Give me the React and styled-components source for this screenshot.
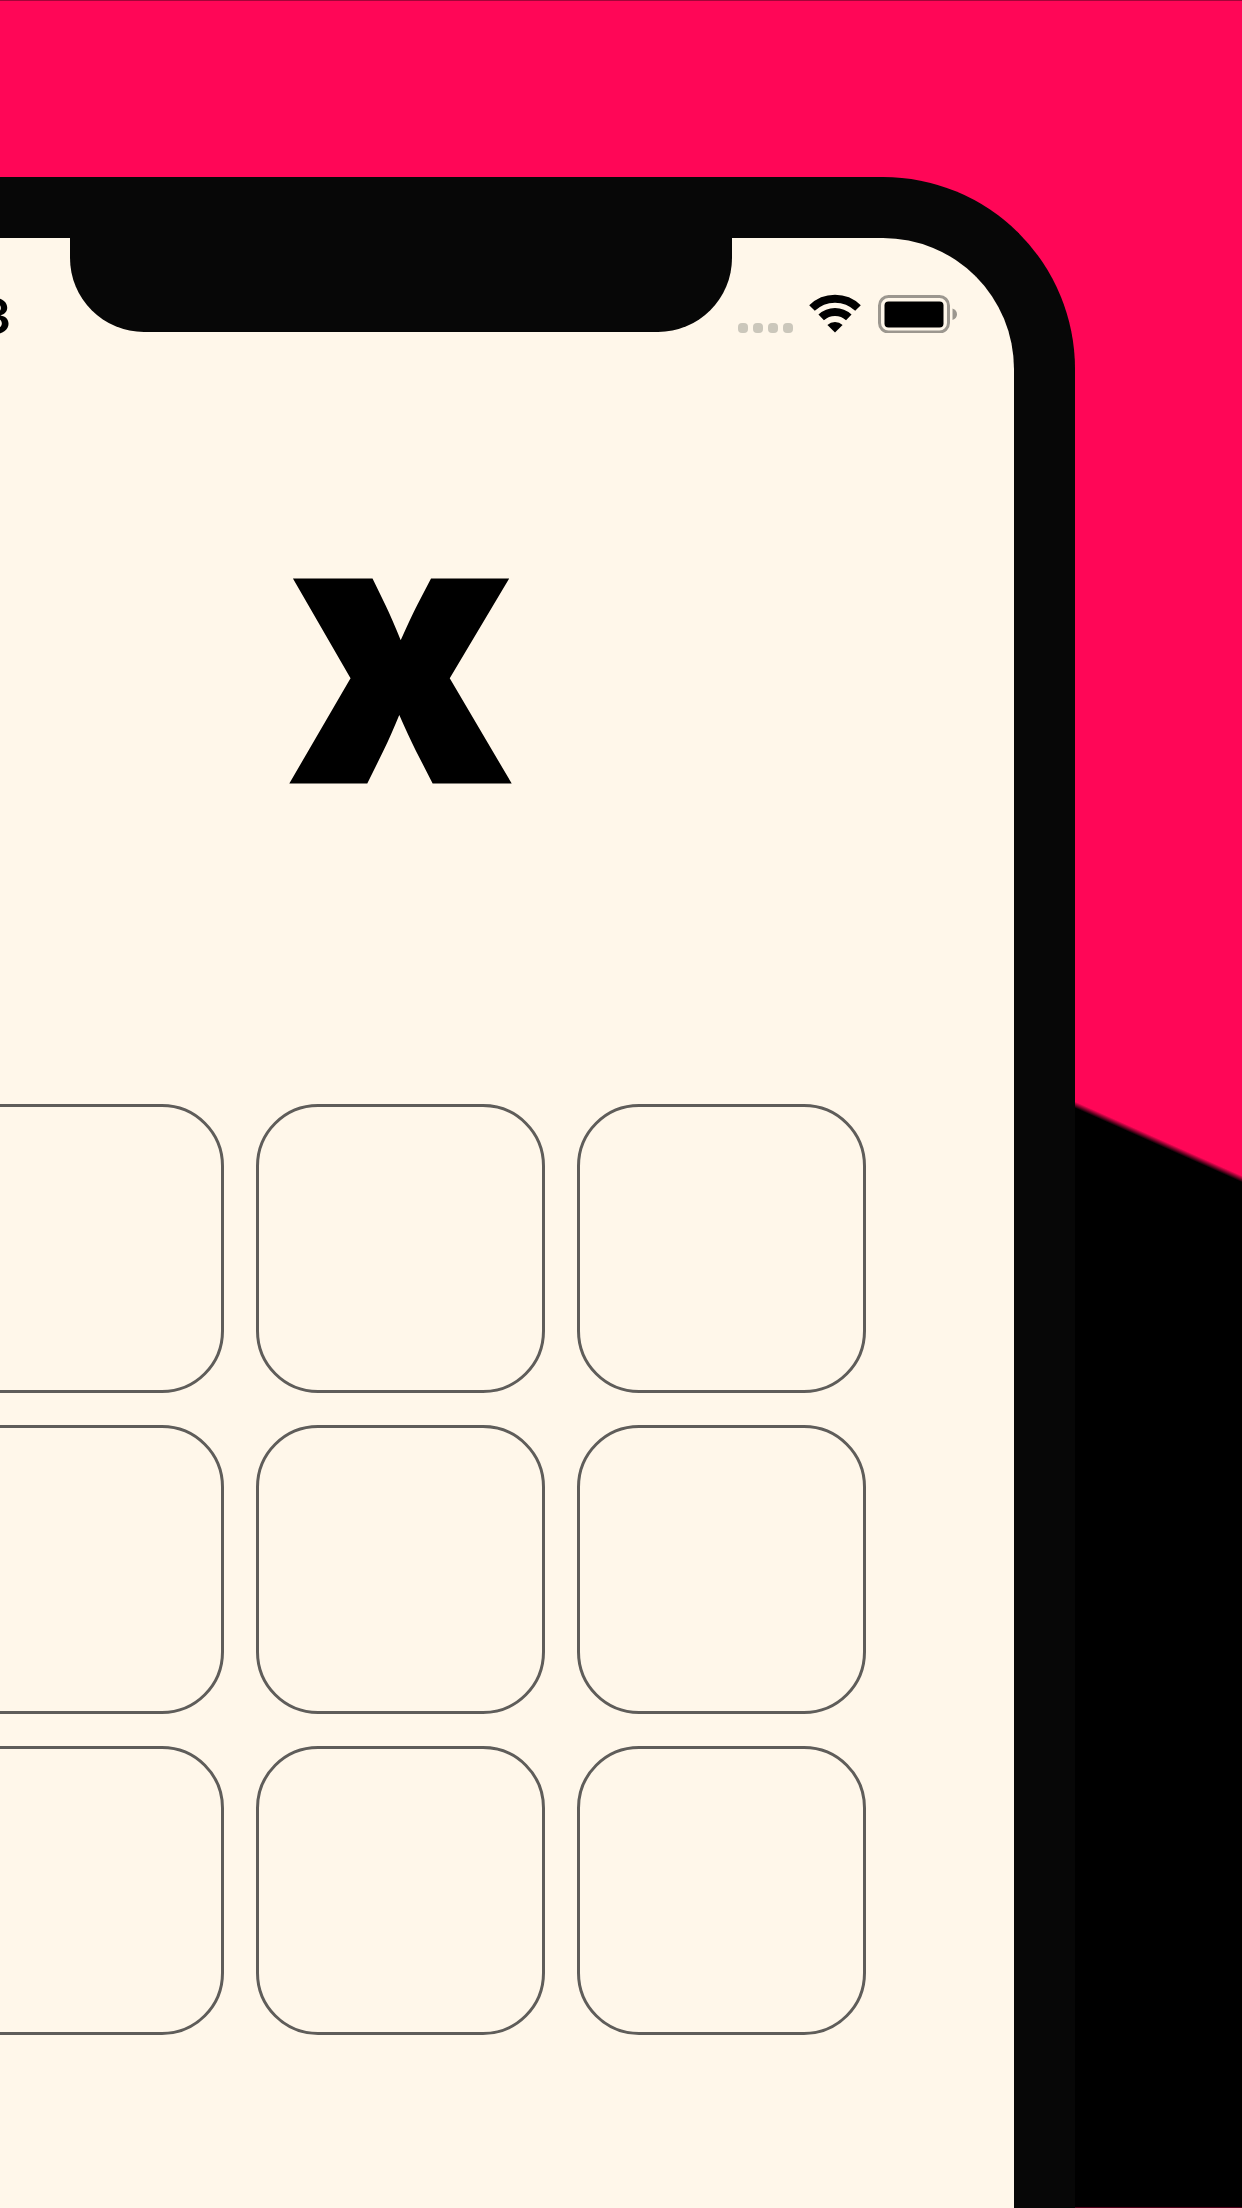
import React, { useState } from "react";
import styled, { createGlobalStyle } from "styled-components";

const GlobalStyle = createGlobalStyle`
  *, *::before, *::after { box-sizing: border-box; }
  body {
    margin: 0;
    background: #000;
    font-family: Inter, "Liberation Sans", sans-serif;
  }
`;

const Page = styled.main`
  display: flex;
  justify-content: flex-end;
  min-height: 100vh;
  padding-top: 177px;
  overflow: hidden;
  background: linear-gradient(
    204deg,
    #ff0657 calc(50% - 187px),
    #000 calc(50% - 181px)
  );
  box-shadow: inset 0 1px #a30439, inset 0 -1px #50021c;
`;

const Phone = styled.section`
  position: relative;
  display: flex;
  flex-direction: column;
  flex: 0 0 auto;
  width: 1349px;
  margin-right: 167px;
  border: 61px solid #070707;
  border-bottom: 0;
  border-radius: 192px 192px 0 0;
  background: #fff7ea;
`;

const Notch = styled.div`
  position: absolute;
  top: -1px;
  left: 50%;
  width: 662px;
  height: 95px;
  margin-left: -331px;
  border-radius: 0 0 74px 74px;
  background: #070707;
`;

const StatusBar = styled.header`
  display: flex;
  align-items: flex-end;
  justify-content: space-between;
  height: 95px;
  padding-right: 57px;
  color: #000;
`;

const Time = styled.time`
  width: 224px;
  font-size: 50px;
  font-weight: 600;
  line-height: 34px;
  text-align: right;
`;

const Indicators = styled.div`
  display: flex;
  align-items: flex-end;
`;

const Signal = styled.div`
  display: flex;
  gap: 5px;
  margin-right: 16px;
`;

const Dot = styled.span`
  width: 10px;
  height: 10px;
  border-radius: 4px;
  background: #cbc7bb;
`;

const WifiIcon = styled.svg`
  display: block;
  width: 52px;
  height: 39px;
  margin-right: 17px;
`;

const BatteryIcon = styled.svg`
  display: block;
  width: 79px;
  height: 38px;
`;

const Turn = styled.h1`
  margin: 0;
  padding: 130px 0 271px;
  font-size: 370px;
  font-weight: 900;
  line-height: 370px;
  text-align: center;
  color: #000;
  -webkit-text-stroke: 3px #000;
`;

const Board = styled.div`
  display: grid;
  grid-template-columns: repeat(3, 289px);
  grid-auto-rows: 289px;
  gap: 32px;
  justify-content: center;
  padding-bottom: 173px;
`;

const Cell = styled.button`
  padding: 0;
  border: 3px solid #5f5d5a;
  border-radius: 62px;
  background: transparent;
  color: #000;
  font: 900 200px/200px Inter, "Liberation Sans", sans-serif;
  cursor: pointer;
`;

export default function App() {
  const [cells, setCells] = useState(Array(9).fill(""));
  const turn = cells.filter(Boolean).length % 2 ? "o" : "x";
  const play = (index) =>
    setCells(cells.map((mark, i) => (i === index && !mark ? turn : mark)));

  return (
    <>
      <GlobalStyle />
      <Page>
        <Phone>
          <Notch />
          <StatusBar>
            <Time>3</Time>
            <Indicators>
              <Signal>
                {[0, 1, 2, 3].map((i) => (
                  <Dot key={i} />
                ))}
              </Signal>
              <WifiIcon viewBox="0 0 52 39" aria-hidden="true">
                <path d="M3 14 A33 33 0 0 1 49 14" fill="none" stroke="#000" strokeWidth="8" />
                <path d="M12.2 23.4 A20 20 0 0 1 39.8 23.4" fill="none" stroke="#000" strokeWidth="8" />
                <path d="M26 38.5 L18.4 31 A11 11 0 0 1 33.6 31 Z" fill="#000" />
              </WifiIcon>
              <BatteryIcon viewBox="0 0 79 38" aria-hidden="true">
                <rect x="1.5" y="1.5" width="69" height="35.5" rx="9" fill="none" stroke="#9c978f" strokeWidth="3" />
                <rect x="6.5" y="6.5" width="59" height="26" rx="4" fill="#000" />
                <path d="M74.5 13.5 C80.5 15.5 80.5 23 74.5 25 Z" fill="#9c978f" />
              </BatteryIcon>
            </Indicators>
          </StatusBar>
          <Turn>{turn}</Turn>
          <Board>
            {cells.map((mark, i) => (
              <Cell key={i} aria-label={`Square ${i + 1}`} onClick={() => play(i)}>
                {mark}
              </Cell>
            ))}
          </Board>
        </Phone>
      </Page>
    </>
  );
}
